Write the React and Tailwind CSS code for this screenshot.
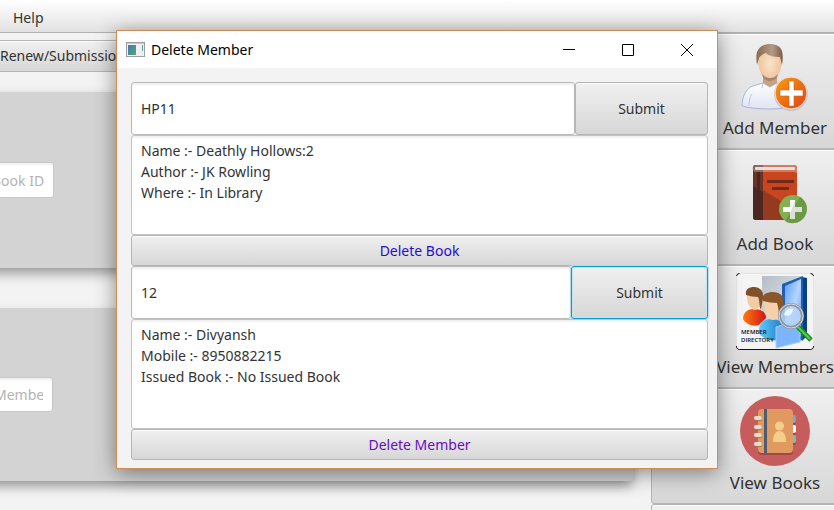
import React from "react";

const face = "border border-[#b5b5b5] bg-linear-to-b from-[#f0f0f0] to-[#d7d7d7] shadow-[inset_0_1px_0_#fbfbfb]";

function AddMemberIcon() {
  return (
    <svg width="70" height="70" viewBox="0 0 70 70" aria-hidden="true">
      <defs>
        <linearGradient id="orange" x1="0" y1="0" x2="1" y2="1">
          <stop offset="0" stopColor="#fba00c" />
          <stop offset="1" stopColor="#e0401c" />
        </linearGradient>
        <linearGradient id="shirt" x1="0" y1="0" x2="0" y2="1">
          <stop offset="0" stopColor="#ffffff" />
          <stop offset="1" stopColor="#dfe4f4" />
        </linearGradient>
        <radialGradient id="skin">
          <stop offset="0" stopColor="#fbe3cb" />
          <stop offset="1" stopColor="#edc49c" />
        </radialGradient>
        <linearGradient id="hair" x1="0" y1="0" x2="1" y2="0">
          <stop offset="0" stopColor="#8a6a52" />
          <stop offset="0.6" stopColor="#b39a86" />
          <stop offset="1" stopColor="#7d5c44" />
        </linearGradient>
      </defs>
      <path d="M23 33h14v12l-7 5-7-5z" fill="#c9a27c" />
      <path d="M2 65c0-9 4-18 11-20l10-3 7 4 7-4 11 3c6 3 9 11 9 20-14 4-41 4-55 0z" fill="url(#shirt)" stroke="#a9b4d6" strokeWidth="1" />
      <path d="M9 65c0-6 1-9 3-12M23 42l-1 5M37 42l1 5" fill="none" stroke="#bcc5e2" />
      <path d="M18 17c0-8 4-12 12-12s12 4 12 12c0 11-4 23-12 23s-12-12-12-23z" fill="url(#skin)" />
      <path d="M22 33c3 3 5 4 8 4s5-1 8-4c-1 5-4 7-8 7s-7-2-8-7z" fill="#a58668" />
      <path d="M17 24c-1-6-1-12 1-15 3-5 8-6 12-6 6 0 10 2 12 7 1 4 1 9 0 14l-2-8c-6 0-11-1-14-4-3 1-6 3-7 5z" fill="url(#hair)" />
      <circle cx="51" cy="53" r="17" fill="#c9c4c4" />
      <circle cx="51" cy="52" r="16" fill="url(#orange)" stroke="#f6e7dc" />
      <path d="M49 40h5v9h9v6h-9v10h-5V55h-9v-6h9z" fill="#fff" stroke="#c96a22" strokeWidth="0.6" />
    </svg>
  );
}

function AddBookIcon() {
  return (
    <svg width="70" height="70" viewBox="0 0 70 70" aria-hidden="true">
      <g transform="translate(3 0)">
        <path d="M20 8h31a3 3 0 0 1 3 3v49a3 3 0 0 1-3 3H20z" fill="#c8451f" />
        <path d="M20 33l34 21v6a3 3 0 0 1-3 3H20z" fill="#953a1e" />
        <path d="M11 8h9v55h-7a3 3 0 0 1-3-3V10z" fill="#6b3226" />
        <path d="M10 29l10 6v28h-7a3 3 0 0 1-3-3z" fill="#4b2720" />
        <path d="M14 14h3v49h-3z" fill="#4a2620" />
        <path d="M12 8h8v7h-8c-3-1-3-6 0-7z" fill="#8f6a60" />
        <path d="M20 8h31c4 1 3 5 3 8l-3-1H20z" fill="#d57b61" />
        <rect x="12" y="10" width="40" height="3" rx="1" fill="#e3dfdc" />
        <path d="M24 23h27v3H24zM29 30h17v3H29z" fill="#6f2a1c" />
        <circle cx="50" cy="52" r="14" fill="#83b152" />
        <path d="M57 40a14 14 0 0 1-15 24z" fill="#6b9a45" />
        <path d="M47 43h5v7h7v5h-7v7h-5v-7h-7v-5h7z" fill="#fff" />
        <path d="M52 44v6h7v5h-7v7h-5v-6z" fill="#dde0db" />
      </g>
    </svg>
  );
}

function MemberDirectoryIcon() {
  return (
    <svg width="78" height="77" viewBox="0 0 78 77" aria-hidden="true">
      <defs>
        <linearGradient id="door" x1="0" y1="0" x2="1" y2="1">
          <stop offset="0" stopColor="#5f9cf2" />
          <stop offset="0.5" stopColor="#b5d6ff" />
          <stop offset="1" stopColor="#4d8ce8" />
        </linearGradient>
        <linearGradient id="panel" x1="0" y1="0" x2="1" y2="1">
          <stop offset="0" stopColor="#b6bdc6" />
          <stop offset="1" stopColor="#eceff3" />
        </linearGradient>
        <linearGradient id="red" x1="0" y1="0" x2="1" y2="0">
          <stop offset="0" stopColor="#ff7a12" />
          <stop offset="1" stopColor="#d01515" />
        </linearGradient>
        <linearGradient id="blue" x1="0" y1="0" x2="1" y2="0">
          <stop offset="0" stopColor="#62ccf8" />
          <stop offset="1" stopColor="#1678cc" />
        </linearGradient>
      </defs>
      <rect x="0.5" y="0.5" width="77" height="76" rx="3" fill="#f4f4f4" stroke="#e4e4e4" />
      <path d="M.5 3a3 3 0 0 1 3-2.500M74.500.5a3 3 0 0 1 3 2.500M.5 73a3 3 0 0 0 3 3.500h71a3 3 0 0 0 3-3.500" fill="none" stroke="#111" />
      <path d="M26 3h40v50H26z" fill="url(#panel)" />
      <path d="M66 4l5 1v58l-5 5z" fill="#0c3f7d" />
      <path d="M46 11l21-8v64l-21 3z" fill="#1d5fb4" />
      <path d="M49 13l16-7v57l-16 5z" fill="url(#door)" />
      <path d="M7 46c0-7 5-10 11-10 7 0 12 3 12 9l-7 7c-7 2-13-1-16-6z" fill="url(#red)" />
      <path d="M11 24c0-6 4-8 7-8 5 0 8 3 8 9s-3 12-7 12-8-6-8-13z" fill="#f3cba5" />
      <path d="M10 22c-1-6 3-8 8-8 6 0 10 4 9 11l-2 12c-2-3-1-9-3-13-4 0-8-1-12-2z" fill="#80502b" />
      <path d="M23 60c-1-10 5-14 13-14 8 0 13 5 12 13l-5 8c-8 2-16-1-20-7z" fill="url(#blue)" />
      <path d="M28 31c0-7 4-10 9-10 6 0 9 5 9 11 0 8-4 15-9 15s-9-8-9-16z" fill="#f5d0ab" />
      <path d="M27 28c-2-6 3-9 10-9 8 0 12 5 10 13l-3 12c-2-4-1-9-3-14-5 0-9-1-14-2z" fill="#8a562b" />
      <path d="M40 54l24-8v23l-24 6z" fill="#7db5fa" stroke="#a9cfff" />
      <path d="M62 54l13 13" stroke="#1f8a27" strokeWidth="5" />
      <path d="M61 53l13 13" stroke="#55d14d" strokeWidth="2" />
      <circle cx="55" cy="43" r="11.500" fill="#b9d6fb" fillOpacity="0.85" stroke="#8b9196" strokeWidth="3" />
      <circle cx="55" cy="43" r="12" fill="none" stroke="#d8dcdf" strokeWidth="1" />
      <path d="M48 42c1-5 5-7 9-6-1 6-4 8-9 6z" fill="#eef6ff" />
      <text x="5" y="61" fontSize="6" fontWeight="600" fontFamily="Open Sans, sans-serif" fill="#111">MEMBER</text>
      <text x="5" y="69" fontSize="6" fontWeight="600" fontFamily="Open Sans, sans-serif" fill="#111">DIRECTORY</text>
    </svg>
  );
}

function ContactsIcon() {
  return (
    <svg width="70" height="70" viewBox="0 0 70 70" aria-hidden="true">
      <circle cx="35" cy="35" r="35" fill="#c75c5c" />
      <path d="M21 15h29a3 3 0 0 1 3 3v38a3 3 0 0 1-3 3H21a3 3 0 0 1-3-3V18z" fill="#9d4a4a" />
      <rect x="50" y="21" width="6" height="8" rx="2" fill="#9d4a4a" />
      <rect x="50" y="31" width="6" height="8" rx="2" fill="#9d4a4a" />
      <rect x="50" y="41" width="6" height="8" rx="2" fill="#9d4a4a" />
      <rect x="50" y="19" width="6" height="8" rx="2" fill="#76a9d0" />
      <rect x="50" y="29" width="6" height="8" rx="2" fill="#fff" />
      <rect x="50" y="39" width="6" height="8" rx="2" fill="#76c2af" />
      <rect x="18" y="13" width="35" height="44" rx="4" fill="#e0995e" />
      <rect x="24" y="13" width="3" height="44" fill="#4f5d73" />
      {[20, 29, 37, 46].map((y) => (
        <g key={y}>
          <rect x="16" y={y} width="6" height="5" rx="2" fill="#b07445" />
          <rect x="14" y={y} width="8" height="4" rx="2" fill="#e0e0d1" />
        </g>
      ))}
      <circle cx="39.500" cy="30" r="4.500" fill="#f5cf87" />
      <path d="M33 46c0-7 2-11 6.500-11S46 39 46 46z" fill="#f5cf87" />
    </svg>
  );
}

function WindowIcon() {
  return (
    <svg width="19" height="16" viewBox="0 0 19 16" aria-hidden="true">
      <defs>
        <linearGradient id="pane" x1="0" y1="0" x2="1" y2="1">
          <stop offset="0" stopColor="#4479a8" />
          <stop offset="1" stopColor="#55a676" />
        </linearGradient>
      </defs>
      <rect x="0.5" y="0.5" width="18" height="14" fill="#f0f0f2" stroke="#9a9ea3" />
      <path d="M1 1.500h17" stroke="#c9ccd1" />
      <rect x="2" y="3" width="8" height="10" fill="url(#pane)" />
      <path d="M16.500 3v6" stroke="#5b9c94" />
    </svg>
  );
}

const actions = [
  { label: "Add Member", Icon: AddMemberIcon },
  { label: "Add Book", Icon: AddBookIcon },
  { label: "View Members", Icon: MemberDirectoryIcon },
  { label: "View Books", Icon: ContactsIcon },
];

const card = "-ml-5 bg-[#d3d3d3] shadow-[0_6px_12px_-1px_rgba(0,0,0,0.4)]";
const cardInput =
  "block rounded-[3px] border border-[#c8c8c8] bg-white px-[9px] shadow-[inset_0_2px_2px_#f0f0f0] placeholder:text-[#b3b3b3] placeholder:opacity-100";

function Lookup({ label, value, details, detailsHeight, submitClass, action, actionColor }) {
  return (
    <section className="flex flex-col">
      <div className="flex h-[53px]">
        <input
          aria-label={label}
          defaultValue={value}
          className="min-w-0 flex-1 rounded-[3px] border border-[#b9b9b9] bg-white px-[9px] shadow-[inset_0_2px_2px_#f0f0f0] outline-none"
        />
        <button type="button" className={`shrink-0 rounded-[3px] ${submitClass}`}>
          Submit
        </button>
      </div>
      <textarea
        aria-label={`${label} details`}
        readOnly
        defaultValue={details}
        className={`block w-full resize-none rounded-[3px] border border-[#c4c4c4] bg-white px-[9px] py-1 leading-[21px] shadow-[inset_0_2px_2px_#f0f0f0] outline-none ${detailsHeight}`}
      />
      <button type="button" className={`h-[31px] w-full rounded-[3px] ${face} ${actionColor}`}>
        {action}
      </button>
    </section>
  );
}

export default function App() {
  return (
    <div className="relative flex h-screen flex-col overflow-hidden bg-[#f3f3f3] font-['Noto_Sans','Open_Sans',sans-serif] text-sm text-[#333]">
      <nav className="flex h-[33px] shrink-0 items-center border-b border-[#b0b0b0] bg-linear-to-b from-white to-[#e2e2e2] px-[13px] pt-1">
        <button type="button">Help</button>
      </nav>
      <div className="flex min-h-0 flex-1">
        <main className="flex min-w-0 flex-1 flex-col pt-[7px] pr-[18px]">
          <button type="button" className={`-ml-2 h-8 w-52 shrink-0 px-[7px] text-left ${face}`}>
            Renew/Submission
          </button>
          <div className="mt-5 flex flex-col gap-10">
            <div className={`py-[70px] ${card}`}>
              <input aria-label="Book ID" placeholder="Book ID" className={`ml-[2px] h-9 w-[72px] ${cardInput}`} />
            </div>
            <div className={`rounded-br-[4px] py-[69px] ${card}`}>
              <input aria-label="Member ID" placeholder="Member ID" className={`ml-1 h-[35px] w-[69px] ${cardInput}`} />
            </div>
          </div>
        </main>
        <aside className="-mr-[65px] flex w-[248px] shrink-0 flex-col">
          {actions.map(({ label, Icon }) => (
            <button
              key={label}
              type="button"
              className={`flex shrink-0 flex-col items-center gap-[5px] rounded-[3px] pt-[7px] pb-2 text-[17px] leading-6 ${face}`}
            >
              <Icon />
              {label}
            </button>
          ))}
          <button type="button" aria-label="More" className={`h-28 shrink-0 rounded-[3px] ${face}`} />
        </aside>
      </div>

      <div
        role="dialog"
        aria-labelledby="dialog-title"
        className="absolute top-[30px] left-[116px] w-[602px] border border-[#d08c55] bg-[#f3f3f3] shadow-[0_4px_20px_rgba(0,0,0,0.45)]"
      >
        <header className="flex h-[37px] items-center bg-white pr-px pl-[9px] text-black">
          <WindowIcon />
          <h1 id="dialog-title" className="flex-1 pl-[6px]">Delete Member</h1>
          <button type="button" aria-label="Minimize" className="flex w-[59px] justify-center">
            <svg width="12" height="12" viewBox="0 0 12 12" stroke="#000"><path d="M0 5.500h12" /></svg>
          </button>
          <button type="button" aria-label="Maximize" className="flex w-[59px] justify-center">
            <svg width="12" height="12" viewBox="0 0 12 12" stroke="#000" fill="none"><path d="M.5.5h11v11H.5z" /></svg>
          </button>
          <button type="button" aria-label="Close" className="flex w-[59px] justify-center">
            <svg width="12" height="12" viewBox="0 0 12 12" stroke="#000"><path d="M0 0l12 12M12 0L0 12" /></svg>
          </button>
        </header>
        <div className="flex flex-col pt-[14px] pr-[9px] pb-2 pl-[14px]">
          <Lookup
            label="Book ID"
            value="HP11"
            details={"Name :- Deathly Hollows:2\nAuthor :- JK Rowling\nWhere :- In Library"}
            detailsHeight="h-[100px]"
            submitClass={`w-[133px] ${face}`}
            action="Delete Book"
            actionColor="text-[#2a0bd0]"
          />
          <Lookup
            label="Member ID"
            value="12"
            details={"Name :- Divyansh\nMobile :- 8950882215\nIssued Book :- No Issued Book"}
            detailsHeight="h-[110px]"
            submitClass="w-[137px] border border-[#039ed3] bg-linear-to-b from-[#f0f0f0] to-[#d7d7d7] shadow-[0_0_1px_1px_#b5dcea,inset_0_0_1px_1px_#c5e4ef]"
            action="Delete Member"
            actionColor="text-[#6a0dbd]"
          />
        </div>
      </div>
    </div>
  );
}
